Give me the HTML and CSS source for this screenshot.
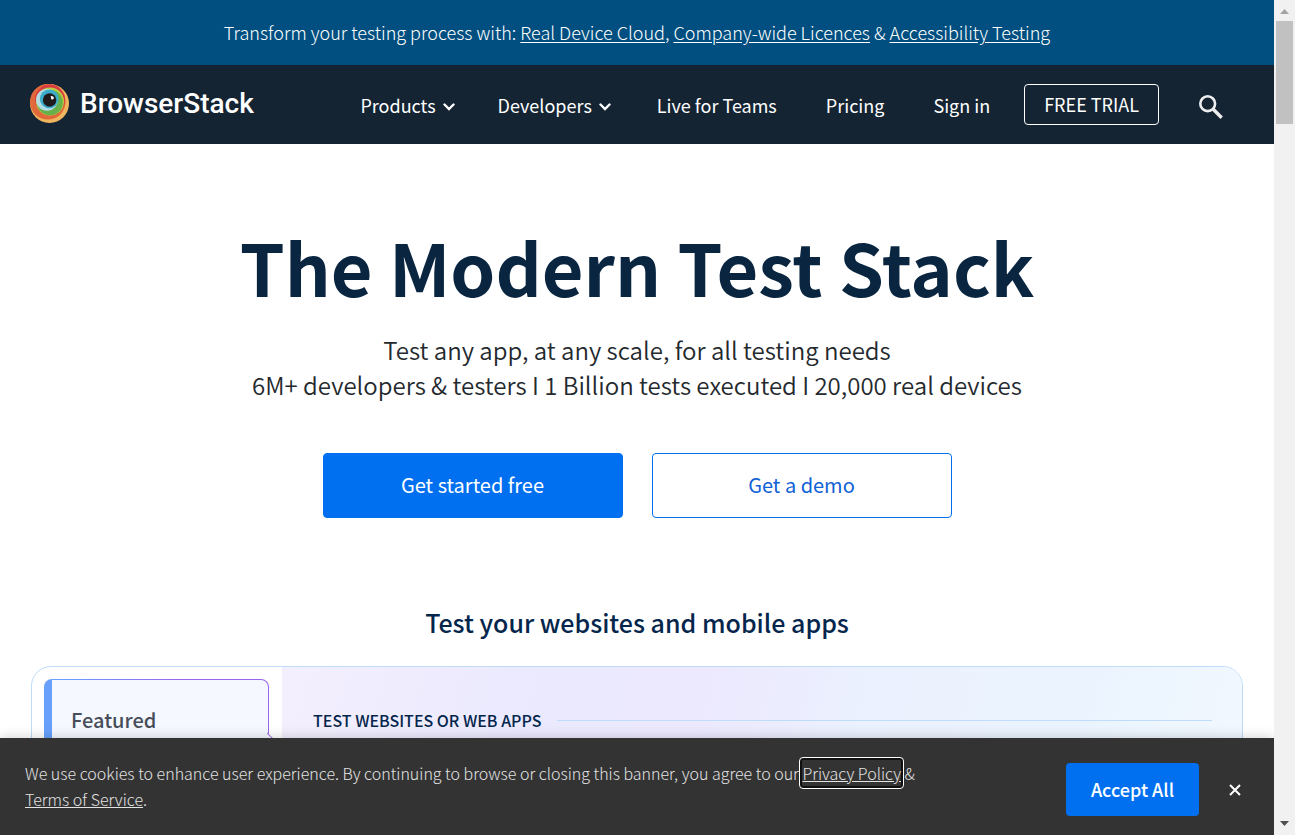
FILE: index.html
```html
<!DOCTYPE html>
<html lang="en">
<head>
<meta charset="utf-8">
<meta name="viewport" content="width=device-width, initial-scale=1">
<title>BrowserStack</title>
<link rel="stylesheet" href="styles.css">
</head>
<body>
<div class="page">
  <div class="promo">
    <p>Transform your testing process with: <a href="#">Real Device Cloud</a>, <a href="#">Company-wide Licences</a> &amp; <a href="#">Accessibility Testing</a></p>
  </div>
  <header class="header">
    <a class="logo" href="#">
      <svg width="40" height="40" viewBox="0 0 40 40" aria-hidden="true">
        <circle cx="19.500" cy="19.500" r="19.500" fill="#f0b55f"/>
        <circle cx="17.800" cy="17.800" r="17.800" fill="#e0683a"/>
        <circle cx="20" cy="15.500" r="15" fill="#d93b3e"/>
        <circle cx="20" cy="17.500" r="14" fill="#b9ce45"/>
        <circle cx="20" cy="18.500" r="12.800" fill="#67b04a"/>
        <circle cx="17" cy="15.800" r="10.900" fill="#b4dbe4"/>
        <circle cx="19.200" cy="14.800" r="9.400" fill="#3caccb"/>
        <circle cx="19.600" cy="16" r="6.700" fill="#1f1b1c"/>
        <path d="M20.500 12.500a2 2 0 0 1 3 2.600c-.8.9-2.600.4-2.600-.6.800.1 0-1.100-.4-2z" fill="#fff"/>
      </svg>
      <span>BrowserStack</span>
    </a>
    <nav class="nav" aria-label="Main">
      <button type="button">Products
        <svg width="12" height="8" viewBox="0 0 12 8" aria-hidden="true"><path d="M1.500 1.500 6 6l4.500-4.500"/></svg>
      </button>
      <button type="button">Developers
        <svg width="12" height="8" viewBox="0 0 12 8" aria-hidden="true"><path d="M1.500 1.500 6 6l4.500-4.500"/></svg>
      </button>
      <a href="#">Live for Teams</a>
      <a href="#">Pricing</a>
      <a href="#">Sign in</a>
    </nav>
    <a class="trial" href="#">FREE TRIAL</a>
    <button class="search" type="button" aria-label="Search">
      <svg width="24" height="24" viewBox="0 0 24 24" aria-hidden="true"><circle cx="8.700" cy="8.700" r="7.400"/><path d="m14 14 8.700 8.700" stroke-width="3.400"/></svg>
    </button>
  </header>
  <main>
    <section class="hero">
      <h1>The Modern Test Stack</h1>
      <p>Test any app, at any scale, for all testing needs<br>6M+ developers &amp; testers I 1 Billion tests executed I 20,000 real devices</p>
      <div class="actions">
        <a class="cta cta-primary" href="#">Get started free</a>
        <a class="cta cta-outline" href="#">Get a demo</a>
      </div>
    </section>
    <section class="products">
      <h2>Test your websites and mobile apps</h2>
      <div class="card">
        <div class="tabs">
          <button class="tab" type="button">Featured</button>
        </div>
        <div class="panel">
          <h3>TEST WEBSITES OR WEB APPS</h3>
        </div>
      </div>
    </section>
  </main>
  <div class="cookies" role="region" aria-label="Cookie notice">
    <p>We use cookies to enhance user experience. By continuing to browse or closing this banner, you agree to our <a class="focused" href="#">Privacy Policy</a> &amp;<br><a href="#">Terms of Service</a>.</p>
    <div class="choices">
      <button class="accept" type="button">Accept All</button>
      <button class="close" type="button" aria-label="Close">
        <svg width="12" height="12" viewBox="0 0 12 12" aria-hidden="true"><path d="m1 1 10 10M11 1 1 11"/></svg>
      </button>
    </div>
  </div>
</div>
<div class="scrollbar" aria-hidden="true">
  <svg width="9" height="5" viewBox="0 0 9 5"><path d="M0 5 4.500 0 9 5z" fill="#a3a3a3"/></svg>
  <div class="thumb"></div>
  <svg width="9" height="5" viewBox="0 0 9 5"><path d="M0 0h9L4.500 5z" fill="#505050"/></svg>
</div>
</body>
</html>
```

FILE: styles.css
```css
* { box-sizing: border-box; }

body {
  margin: 0;
  height: 100vh;
  display: flex;
  overflow: hidden;
  background: #fff;
  color: #24292e;
  font-family: "Noto Sans CJK JP", "Noto Sans", sans-serif;
  font-size: 18px;
}

h1, h2, h3, p { margin: 0; }
a { color: inherit; }
button {
  border: 0;
  padding: 0;
  background: none;
  color: inherit;
  font: inherit;
}

.page {
  position: relative;
  flex: 1;
  min-width: 0;
  overflow: hidden;
}

.promo {
  padding: 18px 24px 19px;
  background: #004f80;
  color: #fff;
  text-align: center;
  font-weight: 300;
  line-height: 28px;
}
.promo a { text-underline-offset: 2px; }

.header {
  display: flex;
  align-items: center;
  padding: 19px 51px 19px 30px;
  background: #142433;
  color: #fff;
}
.header a { text-decoration: none; }
.logo {
  display: flex;
  align-items: center;
  align-self: flex-start;
  gap: 10px;
  font: 500 28px/40px Roboto, sans-serif;
}
.logo svg { display: block; }
.nav {
  display: flex;
  gap: 43px;
  margin-left: auto;
  margin-right: 31px;
  line-height: 28px;
}
.nav a { padding: 0 3px; }
.nav button {
  display: flex;
  align-items: center;
  gap: 7px;
}
.nav svg, .search svg, .close svg {
  display: block;
  fill: none;
  stroke: currentColor;
  stroke-width: 2;
}
.nav svg { margin-top: 4px; stroke-width: 2.4; stroke-linecap: round; }
.trial {
  padding: 6px 19px;
  border: 1px solid #fff;
  border-radius: 4px;
  line-height: 27px;
}
.search { margin-left: 40px; padding-top: 4px; color: #eee; }
.search svg { stroke-width: 2.6; }

.hero {
  padding: 78px 24px 86px;
  text-align: center;
}
.hero h1 {
  color: #092540;
  font-size: 72px;
  font-weight: 700;
  line-height: 88px;
}
.hero p {
  margin-top: 22px;
  font-size: 24px;
  font-weight: 350;
  line-height: 35px;
}
.actions {
  display: flex;
  justify-content: center;
  gap: 29px;
  margin-top: 51px;
}
.cta {
  width: 300px;
  padding: 15px 16px 17px;
  border: 1px solid #0070f0;
  border-radius: 4px;
  font-size: 20px;
  line-height: 31px;
  text-decoration: none;
}
.cta-primary { background: #0070f0; color: #fff; }
.cta-outline { color: #0f62d6; }

.products { padding: 0 31px; }
.products h2 {
  color: #05264c;
  font-size: 25px;
  font-weight: 500;
  line-height: 36px;
  text-align: center;
}
.card {
  display: flex;
  margin-top: 26px;
  min-height: 480px;
  border: 1px solid #bfdcfa;
  border-radius: 20px;
  overflow: hidden;
}
.tabs { width: 250px; padding: 12px 13px 12px 12px; }
.tab {
  position: relative;
  display: flex;
  align-items: flex-start;
  width: 100%;
  height: 132px;
  padding: 24px 20px 0 19px;
  border: 1px solid transparent;
  border-left-width: 8px;
  border-radius: 8px;
  background:
    linear-gradient(#f5f8ff, #f5f8ff) padding-box,
    linear-gradient(90deg, #67a0fb 8%, #9b66ef 60%) border-box;
  color: #474d59;
  font-size: 20px;
  font-weight: 500;
  line-height: 32px;
  text-align: left;
}
.tab::after {
  content: "";
  position: absolute;
  top: 57px;
  right: -10px;
  width: 20px;
  height: 20px;
  border: 1px solid #9b66ef;
  border-left: 0;
  border-bottom: 0;
  background: #f5f8ff;
  transform: rotate(45deg);
}
.panel {
  flex: 1;
  padding: 41px 30px 41px 31px;
  background:
    linear-gradient(105deg, #f3effe 0%, #ebe9fe 24%, #ece9fe 40%, #ebf1fe 55%, #ebf4fe 75%, #f5faff 100%);
}
.panel h3 {
  display: flex;
  align-items: center;
  gap: 16px;
  color: #05264c;
  font-size: 16px;
  font-weight: 500;
  line-height: 24px;
}
.panel h3::after {
  content: "";
  flex: 1;
  height: 1px;
  background: #bfdcfa;
}

.cookies {
  position: absolute;
  right: 0;
  bottom: 0;
  left: 0;
  display: flex;
  align-items: flex-start;
  padding: 22px 33px 19px 25px;
  background: #333;
  color: #e3e3e3;
  box-shadow: 0 0 12px rgba(0, 0, 0, 0.2);
}
.cookies p {
  flex: 1;
  font-size: 16px;
  font-weight: 300;
  line-height: 26px;
}
.cookies .focused {
  padding: 1px 0;
  border-radius: 1px;
  box-shadow: 0 0 0 2px #101010;
  outline: 1px solid #fff;
  outline-offset: 2px;
}
.choices {
  display: flex;
  align-items: center;
  gap: 30px;
  padding-top: 3px;
}
.accept {
  padding: 12px 25px 13px;
  border-radius: 4px;
  background: #0070f0;
  color: #fff;
  font-size: 18px;
  font-weight: 500;
  line-height: 28px;
}
.close { color: #fff; }

.scrollbar {
  display: flex;
  flex-direction: column;
  align-items: center;
  width: 21px;
  padding: 9px 0;
  background: #f1f1f1;
}
.thumb {
  width: 17px;
  height: 103px;
  margin: 7px 0 auto;
  background: #c1c1c1;
}
```
